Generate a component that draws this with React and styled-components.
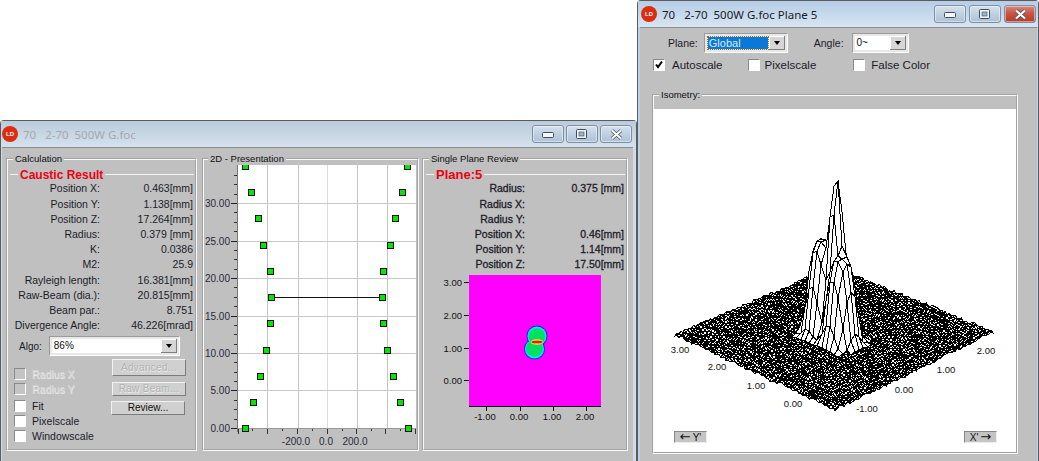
import React from 'react';
import styled, { createGlobalStyle } from 'styled-components';

const Global = createGlobalStyle`
  html, body { margin: 0; padding: 0; background: #fff; }
  #root { width: 1039px; height: 461px; overflow: hidden; }
`;
const Desktop = styled.div`
  width: 1039px; height: 461px; display: flex; align-items: flex-end; background: #fff;
  font-family: "Liberation Sans", Arial, sans-serif; font-size: 10.5px; color: #1c1c28;
`;
const Window = styled.div`
  box-sizing: border-box; height: ${p => p.$h}px; width: ${p => p.$w}px; flex: none;
  display: flex; flex-direction: column;
  background: ${p => p.$active ? '#b9d1ea' : '#cfdce8'};
  border: 1px solid #5c5c5c; border-bottom: 0; border-radius: 4px 4px 0 0;
  box-shadow: inset 0 1px 0 #e4edf5;
`;
const TitleBar = styled.div`
  height: 26px; flex: none; display: flex; align-items: center; padding: 0 ${p => p.$pr}px 0 ${p => p.$pl}px;
  background: linear-gradient(${p => p.$active ? '#b5cde6, #d7e5f2' : '#bccbda, #d4e2ee'});
`;
const AppBadge = styled.div`
  width: 16px; height: 16px; border-radius: 50%; background: #dd2c10; color: #fff; flex: none;
  display: flex; align-items: center; justify-content: center;
  font: bold 6px "Liberation Sans", sans-serif;
`;
const Caption = styled.div`
  margin-left: 5px; flex: 1; white-space: pre; font: 11.5px "Noto Sans", sans-serif;
  color: ${p => p.$active ? '#1c1c1c' : '#a4a8ac'};
`;
const CapButtons = styled.div`display: flex; gap: ${p => p.$gap}px;`;
const CapButton = styled.div`
  box-sizing: border-box; width: 32px; height: 18px; display: flex; align-items: center; justify-content: center;
  border: 1px solid #7f8fa2; border-radius: 3px;
  background: ${p => p.$close ? 'linear-gradient(#d8897d, #c9503f 50%, #bc3b2a)' : 'linear-gradient(#d6e2ee, #bfd0e1 50%, #aec2d6)'};
  box-shadow: inset 0 0 0 1px rgba(255,255,255,.45);
`;
const Body = styled.div`
  flex: 1; min-height: 0; margin: 0 3px 0 1px; background: #c0c0c0; border-top: 1px solid #8d8d8d;
  display: flex; box-sizing: border-box;
`;
const GroupSlot = styled.div`margin: 6px ${p => p.$mr}px 0 ${p => p.$ml}px;`;
const Group = styled.fieldset`
  box-sizing: border-box; margin: 0; padding: 0; min-width: 0; width: ${p => p.$w}px; height: 297px; flex: none;
  border: 2px groove #f8f8f8; display: flex; flex-direction: column;
`;
const Legend = styled.legend`
  padding: 0 2px; margin-left: ${p => p.$m}px; font-size: 9.5px; line-height: 10px; color: #111;
`;
const Heading = styled.div`
  display: flex; align-items: center; height: 15px; margin: 3px 1px 0 2px; gap: 2px;
  font: bold ${p => p.$size}px "Liberation Sans", sans-serif; color: #ee0010;
  &::before { content: ''; width: 8px; height: 1px; background: #f4f4f4; }
  &::after { content: ''; flex: 1; height: 1px; background: #f4f4f4; }
`;
const Rows = styled.div`
  display: grid; grid-template-columns: ${p => p.$cols}; grid-auto-rows: 15.2px; margin-top: -.7px; align-items: center;
  ${p => p.$strong ? '-webkit-text-stroke: .3px #1c1c28;' : ''}
`;
const Label = styled.div`text-align: right; white-space: nowrap; line-height: 15px;`;
const Value = styled.div`text-align: right; white-space: nowrap; line-height: 15px;`;
const AlgoRow = styled.div`display: flex; align-items: center; margin: 3px 0 0 11px; gap: 7px; font-size: 10px;`;
const Combo = styled.div`
  box-sizing: border-box; width: ${p => p.$w}px; height: 20px; display: flex; align-items: center; flex: none;
  padding: 2px; background: #e8e8e8; border: 1px solid; border-color: #9a9a9a #fff #fff #9a9a9a;
`;
const ComboText = styled.div`
  flex: 1; height: 14px; line-height: 14px; background: #fff; padding-left: 2px; font-size: 10px; color: #111;
`;
const ComboSelected = styled.div`
  flex: 1; height: 100%; display: flex; padding: 1px; box-sizing: border-box; background: #fff;
  & > span { flex: 1; background: #0a78d8; color: #d8ecff; line-height: 12px; padding-left: 1px;
    outline: 1px dotted #b06a10; outline-offset: 0; font-size: 11px; }
`;
const ComboArrow = styled.div`
  width: 16px; height: 14px; flex: none; background: #d6d6d6; display: flex; align-items: center; justify-content: center;
  box-shadow: inset -1px -1px 0 #808080, inset 1px 1px 0 #fff;
  &::after { content: ''; border: 3.5px solid transparent; border-top: 4px solid #000; border-bottom: 0; }
`;
const Lower = styled.div`display: flex; margin-top: 3px; justify-content: space-between; padding-right: 9px;`;
const Checks = styled.div`display: flex; flex-direction: column; padding: 9px 0 0 6px; gap: 2.4px;`;
const CheckRow = styled.label`
  display: flex; align-items: center; gap: ${p => p.$gap ?? 6}px; height: 12.6px; white-space: nowrap;
  margin-left: ${p => p.$ml ?? 0}px; margin-top: ${p => p.$mt ?? 0}px;
  color: ${p => p.$off ? '#d6d6d6' : 'inherit'};
  ${p => p.$off ? 'text-shadow: .5px .5px 0 #eee;' : ''}
  font-size: ${p => p.$fs ?? 10.5}px;
`;
const Box = styled.span`
  box-sizing: border-box; width: 12px; height: 12px; flex: none; display: inline-flex; align-items: center; justify-content: center;
  background: ${p => p.$off ? '#c4c4c4' : '#fff'};
  border: 1px solid; border-color: #8a8a8a #fff #fff #8a8a8a;
`;
const Buttons = styled.div`display: flex; flex-direction: column; align-items: flex-end;`;
const Btn = styled.div`
  box-sizing: border-box; width: 74px; height: ${p => p.$h}px; text-align: center; line-height: ${p => p.$h - 2}px; font-size: 10px;
  background: #d0d0d0; margin-right: ${p => p.$mr ?? 0}px; margin-top: ${p => p.$mt ?? 0}px;
  color: ${p => p.$off ? '#b2b2b2' : '#111'};
  ${p => p.$off ? 'text-shadow: .5px .5px 0 #eee; letter-spacing: .3px;' : ''}
  border: 1px solid; border-color: #f2f2f2 #7c7c7c #7c7c7c #f2f2f2;
`;
const Figure = styled.svg`display: block; flex: none;`;
const FigureSlot = styled.div`margin-left: ${p => p.$ml}px;`;
const ControlRow = styled.div`display: flex; align-items: center; height: ${p => p.$h}px; padding-left: ${p => p.$pl}px;`;
const FieldLabel = styled.span`margin: 0 ${p => p.$mr}px 0 ${p => p.$ml ?? 0}px; font-size: 10.5px;`;
const BodyColumn = styled(Body)`
  flex-direction: column; margin: 0 1px 0 2px; padding-top: 3px;
`;
const IsoGroup = styled.fieldset`
  box-sizing: border-box; margin: 15px 0 0 12px; padding: 0; width: 366px; min-width: 0;
  height: 364px; flex: none; border: 2px groove #f8f8f8; display: block;
`;
const PlotArea = styled.div`
  height: 343px; margin: 9px 0 0 0; background: #fff; display: flex; flex-direction: column;
`;
const AxisButtons = styled.div`display: flex; justify-content: space-between; padding: 0 19px 0 20px;`;
const AxisButton = styled.div`
  box-sizing: border-box; width: 33px; height: 12px; background: #c4c4c4; display: flex; align-items: center; justify-content: center; gap: 2px;
  line-height: 11px; font: 10px "Liberation Sans", sans-serif; border: 1px solid; border-color: #888 #eee #eee #888; color: #111;
`;
const AxisArrow = styled.span`font: 13px/10px "DejaVu Sans", sans-serif;`;

const LdIcon = () => <AppBadge>LD</AppBadge>;

const CapIcon = ({ kind }) => {
  if (kind === 'min') return <svg width="12" height="8" viewBox="0 0 12 8"><rect x=".5" y="2.5" width="11" height="5" rx="1" fill="#f4f6f8" stroke="#3d4d60"/></svg>;
  if (kind === 'max') return <svg width="12" height="10" viewBox="0 0 12 10"><rect x=".5" y=".5" width="10" height="9" rx="1" fill="#eef2f6" stroke="#3d4d60"/><rect x="3" y="3" width="5" height="4" fill="#9fb2c6" stroke="#3d4d60" strokeWidth=".6"/></svg>;
  return <svg width="13" height="11" viewBox="0 0 13 11"><path d="M2 1.5 L11 9.5 M11 1.5 L2 9.5" stroke="#3d4d60" strokeWidth="3.6"/><path d="M2 1.5 L11 9.5 M11 1.5 L2 9.5" stroke="#fff" strokeWidth="2.2"/></svg>;
};
const Check = () => <svg width="10" height="10" viewBox="0 0 10 10"><path d="M2 4.5 L4 7 L8 1.5" fill="none" stroke="#000" strokeWidth="2"/></svg>;

const calc = [
  ['Position X:', '0.463[mm]'], ['Position Y:', '1.138[mm]'], ['Position Z:', '17.264[mm]'], ['Radius:', '0.379 [mm]'],
  ['K:', '0.0386'], ['M2:', '25.9'], ['Rayleigh length:', '16.381[mm]'], ['Raw-Beam (dia.):', '20.815[mm]'],
  ['Beam par.:', '8.751'], ['Divergence Angle:', '46.226[mrad]'],
];
const review = [
  ['Radius:', '0.375 [mm]'], ['Radius X:', ''], ['Radius Y:', ''], ['Position X:', '0.46[mm]'], ['Position Y:', '1.14[mm]'], ['Position Z:', '17.50[mm]'],
];

const ys = [166, 192, 218, 244.6, 271, 297, 323, 350, 376, 402, 428];
const lx = [245, 251, 258, 263, 270, 270.7, 270, 265.7, 260, 252.5, 244.5];
const rx = [407, 402, 395, 390, 383, 382, 383, 387, 393, 400, 408];
const hLines = [[203, '30.00'], [241, '25.00'], [278, '20.00'], [316, '15.00'], [353, '10.00'], [390, '5.00'], [428, '0.00']];
const vLines = [267, 298, 327, 357, 387];

const Caustic = () => {
  const minor = [];
  for (let i = -2; i < 7; i++) for (const f of [.25, .5, .75]) {
    const y = 428 - (i + f) * 37.5;
    if (y > 165 && y < 428) minor.push(y);
  }
  return (
    <Figure width="213" height="285" viewBox="204 164 213 285">
      <rect x="238" y="165" width="178" height="263" fill="#fff" />
      {vLines.map(x => <line key={x} x1={x + .5} x2={x + .5} y1="165" y2="428" stroke={x === 327 ? '#dcdcdc' : '#c4c4c4'} />)}
      {hLines.map(([y]) => <line key={y} x1="238" x2="416" y1={y + .5} y2={y + .5} stroke="#c8c8c8" />)}
      <line x1="237.5" x2="237.5" y1="165" y2="432" stroke="#777" />
      <line x1="238" x2="416" y1="428.5" y2="428.5" stroke="#999" />
      {hLines.map(([y, t]) => (
        <g key={t}>
          <line x1="231" x2="237" y1={y + .5} y2={y + .5} stroke="#222" />
          <text x="230" y={y + 3.5} textAnchor="end" fontSize="10" fill="#2a2a3a">{t}</text>
        </g>
      ))}
      {minor.map(y => <line key={y} x1="234" x2="237" y1={Math.round(y) + .5} y2={Math.round(y) + .5} stroke="#333" />)}
      {[238, 267, 297, 327, 356, 385, 415].map(x => <line key={x} x1={x + .5} x2={x + .5} y1="429" y2="434" stroke="#333" />)}
      {[252, 282, 312, 342, 371, 400].map(x => <line key={x} x1={x + .5} x2={x + .5} y1="429" y2="431" stroke="#333" />)}
      <text x="296" y="445" textAnchor="middle" fontSize="10" fill="#2a2a3a">-200.0</text>
      <text x="326" y="445" textAnchor="middle" fontSize="10" fill="#2a2a3a">0.0</text>
      <text x="355" y="445" textAnchor="middle" fontSize="10" fill="#2a2a3a">200.0</text>
      <line x1="271" x2="382" y1="297.5" y2="297.5" stroke="#111" />
      <clipPath id="plotclip"><rect x="238" y="165" width="178" height="267" /></clipPath>
      <g clipPath="url(#plotclip)">
        {ys.flatMap((y, i) => [lx[i], rx[i]].map(x => (
          <rect key={`${x}-${y}`} x={Math.round(x) - 2.5} y={Math.round(y) - 2.5} width="6" height="6" fill="#00e800" stroke="#111" />
        )))}
      </g>
    </Figure>
  );
};

const FalseColor = () => (
  <Figure width="190" height="158" viewBox="436 272 190 158">
    <defs>
      <filter id="soft" x="-30%" y="-30%" width="160%" height="160%"><feGaussianBlur stdDeviation=".7" /></filter>
    </defs>
    <rect x="469" y="275" width="132" height="131" fill="#ff00ff" />
    <g filter="url(#soft)">
      <circle cx="537" cy="336" r="10.5" fill="#2020e0" /><circle cx="534.5" cy="349" r="10.5" fill="#2020e0" />
      <circle cx="537" cy="336" r="9.6" fill="#00e8f0" /><circle cx="534.5" cy="349" r="9.6" fill="#00e8f0" />
      <circle cx="537" cy="336.5" r="8.2" fill="#00e060" /><circle cx="534.5" cy="348.5" r="8.2" fill="#00e060" />
      <ellipse cx="537" cy="342" rx="6.5" ry="3" fill="#e8d030" />
      <ellipse cx="537" cy="342" rx="5.5" ry="1.3" fill="#e81818" />
    </g>
    <line x1="469" x2="601" y1="406.5" y2="406.5" stroke="#111" />
    {[[282, '3.00'], [315, '2.00'], [348, '1.00'], [380, '0.00']].map(([y, t]) => (
      <g key={t}>
        <line x1="464" x2="469" y1={y + .5} y2={y + .5} stroke="#111" />
        <text x="462" y={y + 3.5} textAnchor="end" fontSize="9.5" fill="#111">{t}</text>
      </g>
    ))}
    {[[486, '-1.00'], [520, '0.00'], [553, '1.00'], [586, '2.00']].map(([x, t]) => (
      <g key={t}>
        <line x1={x + .5} x2={x + .5} y1="406" y2="411" stroke="#111" />
        <text x={x - 1} y="420" textAnchor="middle" fontSize="9.5" fill="#111">{t}</text>
      </g>
    ))}
  </Figure>
);

/* seeded noise so the isometric surface is stable */
let seed = 7;
const rnd = () => { seed = (seed * 16807) % 2147483647; return seed / 2147483647; };
const corner = { L: [675, 335], B: [835, 410], R: [993, 332], T: [833, 267] };
const project = (u, v) => {
  const x = (1 - u) * (1 - v) * corner.B[0] + u * (1 - v) * corner.R[0] + (1 - u) * v * corner.L[0] + u * v * corner.T[0];
  const y = (1 - u) * (1 - v) * corner.B[1] + u * (1 - v) * corner.R[1] + (1 - u) * v * corner.L[1] + u * v * corner.T[1];
  return [x, y];
};
const peakHeight = (u, v) => {
  const dome = (cu, cv, r, a) => {
    const d = Math.hypot(u - cu, v - cv) / r;
    return a * Math.exp(-Math.pow(d, 4));
  };
  const a = dome(.4875, .56, .076, 92);
  const b = dome(.475, .43, .076, 85);
  const spike = 165 * Math.exp(-(((u - .5) / .055) ** 2) - (((v - .485) / .05) ** 2));
  return Math.max(a, b, spike);
};
/* painter's algorithm over one grid: far cells (high u, high v) first */
const buildCells = (n, elevate, jitter, keep) => {
  const g = [];
  const h = [];
  for (let i = 0; i <= n; i++) {
    g[i] = [];
    h[i] = [];
    for (let j = 0; j <= n; j++) {
      const u = i / n, v = j / n;
      const [x, y] = project(u, v);
      h[i][j] = elevate(u, v);
      g[i][j] = [Math.round(x), Math.round(y - h[i][j] - jitter())];
    }
  }
  const out = [];
  for (let s = 2 * n - 2; s >= 0; s--) {
    for (let i = Math.min(n - 1, s); i >= 0 && s - i < n; i--) {
      const j = s - i;
      if (!keep(Math.max(h[i][j], h[i + 1][j], h[i + 1][j + 1], h[i][j + 1]))) continue;
      const [a, b, c, e] = [g[i][j], g[i + 1][j], g[i + 1][j + 1], g[i][j + 1]];
      out.push(`M${a[0]} ${a[1]}L${b[0]} ${b[1]}L${c[0]} ${c[1]}L${e[0]} ${e[1]}Z`);
    }
  }
  return out;
};
const floorCells = buildCells(84, () => 0, () => rnd() * 3.4 - 1.4, () => true);
const peakCells = buildCells(38, peakHeight, () => rnd() * 1.6 - .6, h => h > 3);

const Isometry = () => (
  <Figure width="362" height="322" viewBox="654 109 362 322">
    <g shapeRendering="crispEdges" fill="#fff" stroke="#000" strokeWidth="1">
      {floorCells.map((d, i) => <path key={i} d={d} />)}
      {peakCells.map((d, i) => <path key={i} d={d} />)}
    </g>
    {[[680, 350, '3.00'], [717, 367, '2.00'], [756, 386, '1.00'], [793, 404, '0.00'], [867, 409, '-1.00'], [904, 390, '0.00'], [946, 370, '1.00'], [986, 351, '2.00']].map(([x, y, t]) => (
      <text key={`${x}`} x={x} y={y + 3} textAnchor="middle" fontSize="9.5" fill="#111">{t}</text>
    ))}
  </Figure>
);

export default function App() {
  return (
    <Desktop>
      <Global />
      <Window $w={637} $h={341}>
        <TitleBar $pl={1} $pr={4}>
          <LdIcon />
          <Caption>{'70   2-70  500W G.foc'}</Caption>
          <CapButtons $gap={2}>
            <CapButton><CapIcon kind="min" /></CapButton>
            <CapButton><CapIcon kind="max" /></CapButton>
            <CapButton><CapIcon kind="close" /></CapButton>
          </CapButtons>
        </TitleBar>
        <Body>
          <GroupSlot $ml={4} $mr={5}>
            <Group $w={191}>
              <Legend $m={5}>Calculation</Legend>
              <Heading $size={12}>Caustic Result</Heading>
              <Rows $cols="92px 93px">
                {calc.map(([l, v]) => <React.Fragment key={l}><Label>{l}</Label><Value>{v}</Value></React.Fragment>)}
              </Rows>
              <AlgoRow>
                <span>Algo:</span>
                <Combo $w={131}>
                  <ComboText>86%</ComboText>
                  <ComboArrow />
                </Combo>
              </AlgoRow>
              <Lower>
                <Checks>
                  <CheckRow $off><Box $off />Radius X</CheckRow>
                  <CheckRow $off><Box $off />Radius Y</CheckRow>
                  <CheckRow $mt={2}><Box />Fit</CheckRow>
                  <CheckRow><Box />Pixelscale</CheckRow>
                  <CheckRow><Box />Windowscale</CheckRow>
                </Checks>
                <Buttons>
                  <Btn $off $h={17}>Advanced...</Btn>
                  <Btn $off $h={14} $mt={6}>Raw Beam...</Btn>
                  <Btn $h={14} $mr={1} $mt={5}>Review...</Btn>
                </Buttons>
              </Lower>
            </Group>
          </GroupSlot>
          <GroupSlot $ml={0} $mr={3}>
            <Group $w={217}>
              <Legend $m={4}>2D - Presentation</Legend>
              <Caustic />
            </Group>
          </GroupSlot>
          <GroupSlot $ml={0} $mr={0}>
            <Group $w={206}>
              <Legend $m={5}>Single Plane Review</Legend>
              <Heading $size={13}>Plane:5</Heading>
              <Rows $cols="101px 99px" $strong>
                {review.map(([l, v]) => <React.Fragment key={l}><Label>{l}</Label><Value>{v}</Value></React.Fragment>)}
              </Rows>
              <FigureSlot $ml={12}><FalseColor /></FigureSlot>
            </Group>
          </GroupSlot>
        </Body>
      </Window>
      <Window $w={402} $h={461} $active>
        <TitleBar $pl={3} $pr={2} $active>
          <LdIcon />
          <Caption $active>{'70   2-70  500W G.foc Plane 5'}</Caption>
          <CapButtons $gap={3}>
            <CapButton><CapIcon kind="min" /></CapButton>
            <CapButton><CapIcon kind="max" /></CapButton>
            <CapButton $close><CapIcon kind="close" /></CapButton>
          </CapButtons>
        </TitleBar>
        <BodyColumn>
          <ControlRow $h={24} $pl={28}>
            <FieldLabel $mr={6}>Plane:</FieldLabel>
            <Combo $w={84}>
              <ComboSelected><span>Global</span></ComboSelected>
              <ComboArrow />
            </Combo>
            <FieldLabel $ml={26} $mr={8}>Angle:</FieldLabel>
            <Combo $w={57}>
              <ComboText>0~</ComboText>
              <ComboArrow />
            </Combo>
          </ControlRow>
          <ControlRow $h={20} $pl={13}>
            <CheckRow $gap={7} $fs={11.5}><Box><Check /></Box>Autoscale</CheckRow>
            <CheckRow $gap={5} $fs={11.5} $ml={25}><Box />Pixelscale</CheckRow>
            <CheckRow $gap={6} $fs={11.5} $ml={37}><Box />False Color</CheckRow>
          </ControlRow>
          <IsoGroup>
            <Legend $m={5}>Isometry:</Legend>
            <PlotArea>
              <Isometry />
              <AxisButtons>
                <AxisButton><AxisArrow>←</AxisArrow>Y'</AxisButton>
                <AxisButton>X'<AxisArrow>→</AxisArrow></AxisButton>
              </AxisButtons>
            </PlotArea>
          </IsoGroup>
        </BodyColumn>
      </Window>
    </Desktop>
  );
}
